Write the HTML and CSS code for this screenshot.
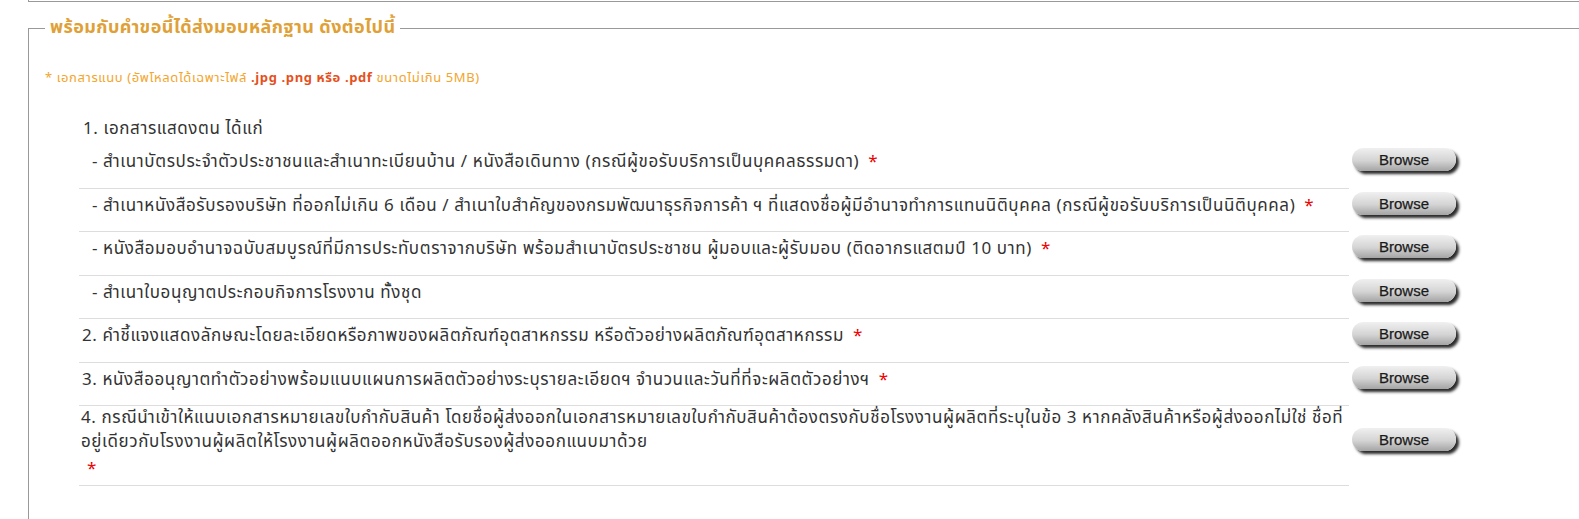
FILE: index.html
```html
<!DOCTYPE html>
<html lang="th">
<head>
    <meta charset="UTF-8">
    <meta name="viewport" content="width=device-width, initial-scale=1.0">
    <title>หลักฐานประกอบคำขอ</title>
    <link rel="stylesheet" href="styles.css">
</head>
<body>
    <div class="prev-box"></div>

    <fieldset class="docs">
        <legend>พร้อมกับคำขอนี้ได้ส่งมอบหลักฐาน ดังต่อไปนี้</legend>

        <div class="note">* เอกสารแนบ (อัพโหลดได้เฉพาะไฟล์ <b>.jpg .png หรือ .pdf</b> ขนาดไม่เกิน 5MB)</div>

        <div class="doc-list">
            <div class="doc-row head">
                <div class="doc-text">1. เอกสารแสดงตน ได้แก่</div>
            </div>

            <div class="doc-row">
                <div class="doc-text sub">- สำเนาบัตรประจำตัวประชาชนและสำเนาทะเบียนบ้าน / หนังสือเดินทาง (กรณีผู้ขอรับบริการเป็นบุคคลธรรมดา) <span class="req">*</span></div>
                <button class="browse">Browse</button>
            </div>

            <div class="doc-row">
                <div class="doc-text sub">- สำเนาหนังสือรับรองบริษัท ที่ออกไม่เกิน 6 เดือน / สำเนาใบสำคัญของกรมพัฒนาธุรกิจการค้า ฯ ที่แสดงชื่อผู้มีอำนาจทำการแทนนิติบุคคล (กรณีผู้ขอรับบริการเป็นนิติบุคคล) <span class="req">*</span></div>
                <button class="browse">Browse</button>
            </div>

            <div class="doc-row">
                <div class="doc-text sub">- หนังสือมอบอำนาจฉบับสมบูรณ์ที่มีการประทับตราจากบริษัท พร้อมสำเนาบัตรประชาชน ผู้มอบและผู้รับมอบ (ติดอากรแสตมป์ 10 บาท) <span class="req">*</span></div>
                <button class="browse">Browse</button>
            </div>

            <div class="doc-row">
                <div class="doc-text sub">- สำเนาใบอนุญาตประกอบกิจการโรงงาน ทั้งชุด</div>
                <button class="browse">Browse</button>
            </div>

            <div class="doc-row">
                <div class="doc-text">2. คำชี้แจงแสดงลักษณะโดยละเอียดหรือภาพของผลิตภัณฑ์อุตสาหกรรม หรือตัวอย่างผลิตภัณฑ์อุตสาหกรรม <span class="req">*</span></div>
                <button class="browse">Browse</button>
            </div>

            <div class="doc-row">
                <div class="doc-text">3. หนังสืออนุญาตทำตัวอย่างพร้อมแนบแผนการผลิตตัวอย่างระบุรายละเอียดฯ จำนวนและวันที่ที่จะผลิตตัวอย่างฯ <span class="req">*</span></div>
                <button class="browse">Browse</button>
            </div>

            <div class="doc-row">
                <div class="doc-text multi">4. กรณีนำเข้าให้แนบเอกสารหมายเลขใบกำกับสินค้า โดยชื่อผู้ส่งออกในเอกสารหมายเลขใบกำกับสินค้าต้องตรงกับชื่อโรงงานผู้ผลิตที่ระบุในข้อ 3 หากคลังสินค้าหรือผู้ส่งออกไม่ใช่ ชื่อที่<br>อยู่เดียวกับโรงงานผู้ผลิตให้โรงงานผู้ผลิตออกหนังสือรับรองผู้ส่งออกแนบมาด้วย<br>
                    <span class="req">*</span></div>
                <button class="browse">Browse</button>
            </div>
        </div>
    </fieldset>
</body>
</html>
```

FILE: styles.css
```css
html, body {
    margin: 0;
    padding: 0;
    background: #fff;
    overflow: hidden;
}
body {
    font-family: Tahoma, "Noto Sans Thai", "Liberation Sans", sans-serif;
    color: #333;
    height: 519px;
}
.prev-box {
    margin-left: 28px;
    height: 1px;
    border-left: 1px solid #999;
    border-bottom: 1px solid #999;
}
.docs {
    margin: 14px 0 0 28px;
    padding: 0 0 80px 16px;
    width: 1600px;
    border: 1px solid #999;
    border-right: none;
}
.docs legend {
    padding: 0 5px;
    font-size: 18px;
    line-height: 24px;
    letter-spacing: 0.4px;
    font-weight: bold;
    color: #dfa137;
}
.note {
    margin-top: 30px;
    font-size: 13px;
    line-height: 16px;
    letter-spacing: 0.6px;
    color: #f3a52c;
}
.note b {
    color: #e5501c;
}
.doc-list {
    margin: 26px 0 0 34px;
}
.doc-row {
    display: flex;
    align-items: center;
}
.doc-text {
    flex: 0 0 1270px;
    box-sizing: border-box;
    padding: 5px 0 13.5px 3px;
    font-size: 17px;
    line-height: 24px;
    letter-spacing: 0.6px;
    white-space: nowrap;
    border-bottom: 1px solid #ddd;
}
.doc-text.sub {
    padding-left: 13px;
}
.doc-row.head .doc-text {
    padding: 5px 0 4px 4px;
    border-bottom: none;
}
.doc-text.multi {
    padding: 0 0 4px 2px;
}
.req {
    color: #e00;
    font-size: 17px;
    margin-left: 4px;
}
.multi .req {
    margin-left: 6px;
    vertical-align: -3px;
}
.browse {
    margin: 0 0 14px 3px;
    width: 104px;
    height: 23px;
    padding: 0;
    border: none;
    border-radius: 12px;
    background: linear-gradient(#f0f0f0, #d4d4d4 55%, #a4a4a4);
    box-shadow: 3px 3px 3px #2a2a2a;
    font-family: "Liberation Sans", Arial, sans-serif;
    font-size: 15px;
    color: #1a1a1a;
    -webkit-text-stroke: 0.25px #1a1a1a;
    cursor: pointer;
}
.browse:hover {
    background: linear-gradient(#f6f6f6, #dedede 55%, #b2b2b2);
}
```
